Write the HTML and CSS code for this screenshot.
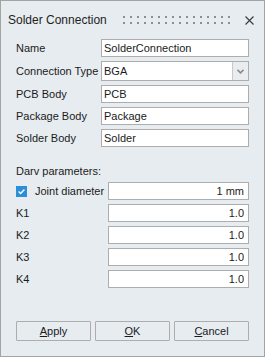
FILE: index.html
```html
<!DOCTYPE html>
<html>

<head>
    <meta charset="UTF-8">
    <link rel="stylesheet" href="styles.css">
    <title>Solder Connection</title>
</head>

<body>
    <div class="dialog">
        <div class="titleBar">
            <div class="titleText">Solder Connection</div>
            <div class="grip"></div>
            <div class="closeButton">
                <svg width="9" height="9" viewBox="0 0 9 9">
                    <path d="M0.5 0.5 L8.5 8.5 M8.5 0.5 L0.5 8.5" stroke="#3a3a3a" stroke-width="1.1" fill="none" />
                </svg>
            </div>
        </div>

        <div class="formGrid">
            <div class="label">Name</div>
            <input class="field" type="text" value="SolderConnection">

            <div class="label">Connection Type</div>
            <div class="combo">
                <div class="comboText">BGA</div>
                <div class="comboButton">
                    <svg width="7" height="5" viewBox="0 0 7 5">
                        <path d="M0.5 0.8 L3.5 3.8 L6.5 0.8" stroke="#8a8a8a" stroke-width="1.6" fill="none" />
                    </svg>
                </div>
            </div>

            <div class="label">PCB Body</div>
            <input class="field" type="text" value="PCB">

            <div class="label">Package Body</div>
            <input class="field" type="text" value="Package">

            <div class="label">Solder Body</div>
            <input class="field" type="text" value="Solder">
        </div>

        <div class="sectionTitle">Darv parameters:</div>

        <div class="paramGrid">
            <div class="label checkLabel">
                <span class="checkBox">
                    <svg width="11" height="11" viewBox="0 0 11 11">
                        <path d="M2.6 5.6 L4.6 7.5 L8.4 3.4" stroke="white" stroke-width="1.4" fill="none" />
                    </svg>
                </span>
                Joint diameter
            </div>
            <input class="field number" type="text" value="1 mm">

            <div class="label">K1</div>
            <input class="field number" type="text" value="1.0">

            <div class="label">K2</div>
            <input class="field number" type="text" value="1.0">

            <div class="label">K3</div>
            <input class="field number" type="text" value="1.0">

            <div class="label">K4</div>
            <input class="field number" type="text" value="1.0">
        </div>

        <div class="buttonRow">
            <div class="button"><u>A</u>pply</div>
            <div class="button"><u>O</u>K</div>
            <div class="button"><u>C</u>ancel</div>
        </div>
    </div>
</body>

</html>
```

FILE: styles.css
```css
body {
    margin: 0;
    font-family: "Liberation Sans", Arial, sans-serif;
    font-size: 11px;
    color: #1b1b1b;
}

.dialog {
    width: 265px;
    height: 357px;
    box-sizing: border-box;
    border: solid 1px #a3a3a3;
    background: #e6ecf0;
    display: flex;
    flex-direction: column;
    padding: 0 15px 15px 15px;
}

.titleBar {
    height: 38px;
    display: flex;
    align-items: center;
    margin: 0 -15px 0 -8px;
}

.titleText {
    font-size: 12px;
    color: #1e1e1e;
}

.grip {
    width: 107px;
    height: 8px;
    margin-left: 16px;
    background-image:
        linear-gradient(180deg, transparent 2px, #e6ecf0 2px),
        linear-gradient(90deg, #8e8e8e 2px, transparent 2px);
    background-size: 7px 6px;
}

.closeButton {
    margin-left: auto;
    margin-right: 10px;
    width: 9px;
    height: 9px;
    display: flex;
}

.formGrid {
    display: grid;
    grid-template-columns: 85px 1fr;
    row-gap: 4px;
    align-items: center;
}

.paramGrid {
    display: grid;
    grid-template-columns: 92px 1fr;
    row-gap: 4px;
    align-items: center;
    margin-top: 4px;
}

.label {
    white-space: nowrap;
}

.field {
    height: 18px;
    box-sizing: border-box;
    border: solid 1px #adadad;
    background: white;
    padding: 0 2px;
    margin: 0;
    font-family: inherit;
    font-size: 11px;
    color: #1b1b1b;
    outline: none;
    width: 100%;
}

.number {
    text-align: right;
    padding-right: 4px;
}

.combo {
    height: 20px;
    box-sizing: border-box;
    border: solid 1px #adadad;
    background: white;
    display: flex;
    align-items: stretch;
}

.comboText {
    flex: 1;
    padding-left: 2px;
    display: flex;
    align-items: center;
}

.comboButton {
    width: 15px;
    border-left: solid 1px #c9c9c9;
    background: #e9edf0;
    display: flex;
    align-items: center;
    justify-content: center;
}

.sectionTitle {
    margin-top: 17px;
    line-height: 14px;
}

.checkLabel {
    display: flex;
    align-items: center;
    gap: 8px;
}

.checkBox {
    width: 11px;
    height: 11px;
    background: #2a8fd6;
    display: flex;
}

.buttonRow {
    margin-top: auto;
    display: flex;
    gap: 4px;
}

.button {
    width: 75px;
    height: 20px;
    box-sizing: border-box;
    border: solid 1px #adadad;
    border-radius: 1px;
    background: #e6ecf0;
    display: flex;
    align-items: center;
    justify-content: center;
    cursor: pointer;
}
```
